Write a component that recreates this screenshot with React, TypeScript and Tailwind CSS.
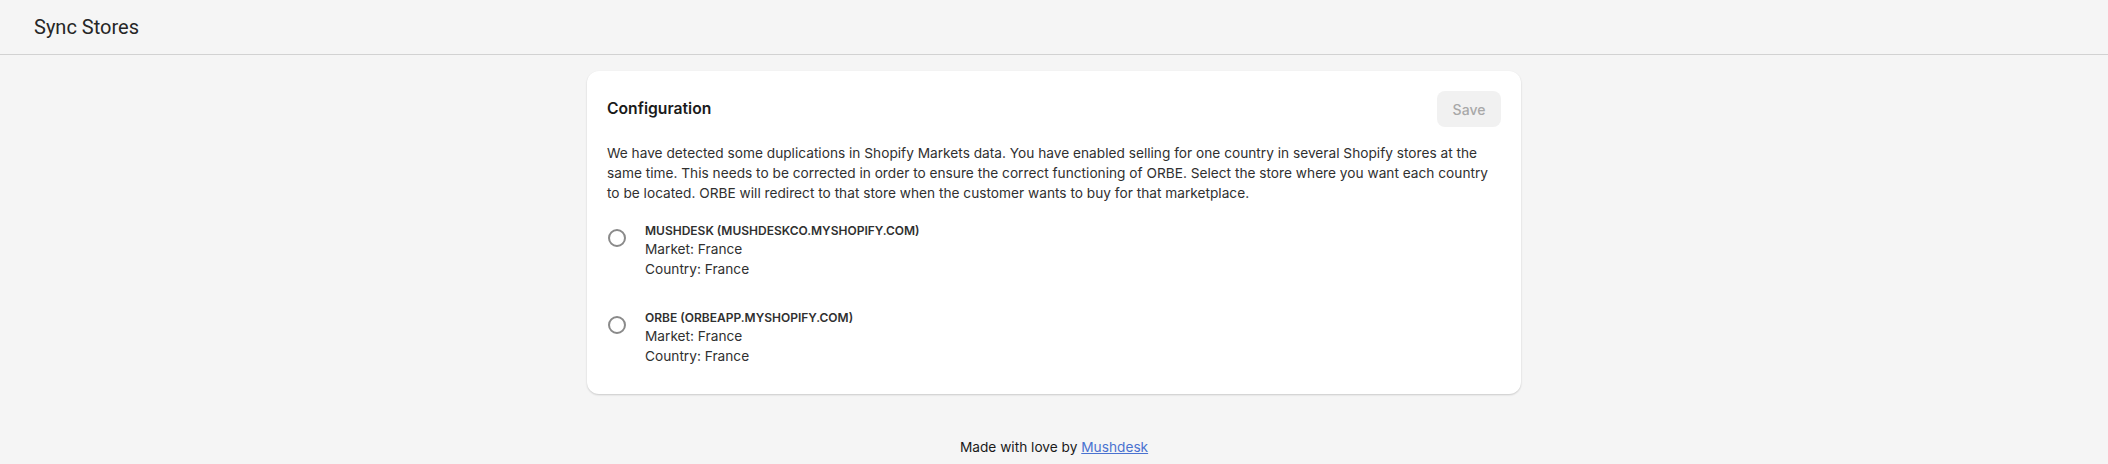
import React from "react";

function StoreOption({ name }: { name: string }) {
  return (
    <label className="flex items-start">
      <span className="ml-px mt-[6px] block h-[18px] w-[18px] shrink-0 rounded-full border-2 border-[#8a8a8a] bg-white" />
      <span className="ml-[19px] flex flex-col">
        <span className="text-[12px] font-semibold uppercase leading-[16px] text-[#303030]">{name}</span>
        <span className="text-[13.7px] leading-[20px] text-[#303030]">Market: France</span>
        <span className="text-[13.7px] leading-[20px] text-[#303030]">Country: France</span>
      </span>
    </label>
  );
}

export default function App() {
  return (
    <div
      className="min-h-[464px] bg-[#f5f5f5] text-[#303030]"
      style={{ fontFamily: "Inter, 'Noto Sans', sans-serif" }}
    >
      <header className="flex h-[55px] items-center border-b border-[#d2d2d2] px-[34px]">
        <h1
          className="text-[20px] leading-[24px] text-[#262626]"
          style={{ fontFamily: "Roboto, 'Liberation Sans', sans-serif" }}
        >
          Sync Stores
        </h1>
      </header>
      <main className="flex flex-col items-center pt-[16px]">
        <section className="w-[934px] rounded-[12px] bg-white px-5 pb-[28px] pt-5 shadow-[0_1px_2px_rgba(0,0,0,0.18)]">
          <div className="flex items-center justify-between">
            <h2 className="text-[15.7px] font-semibold leading-[20px] text-[#1a1a1a]">Configuration</h2>
            <button className="h-9 w-16 rounded-[8px] bg-[#f1f1f1] text-[14px] font-medium text-[#a8a8a8]">
              Save
            </button>
          </div>
          <p className="mt-4 text-[13.7px] leading-[20px] text-[#303030]">
            We have detected some duplications in Shopify Markets data. You have enabled selling for one country in
            several Shopify stores at the same time. This needs to be corrected in order to ensure the correct
            functioning of ORBE. Select the store where you want each country to be located. ORBE will redirect to that
            store when the customer wants to buy for that marketplace.
          </p>
          <div className="mt-5 flex flex-col gap-[31px]">
            <StoreOption name="Mushdesk (mushdeskco.myshopify.com)" />
            <StoreOption name="Orbe (orbeapp.myshopify.com)" />
          </div>
        </section>
        <footer className="mt-[43px] text-[13.7px] leading-[20px] text-[#1a1a1a]">
          Made with love by{" "}
          <a href="#" className="text-[#4a72d0] underline">
            Mushdesk
          </a>
        </footer>
      </main>
    </div>
  );
}
